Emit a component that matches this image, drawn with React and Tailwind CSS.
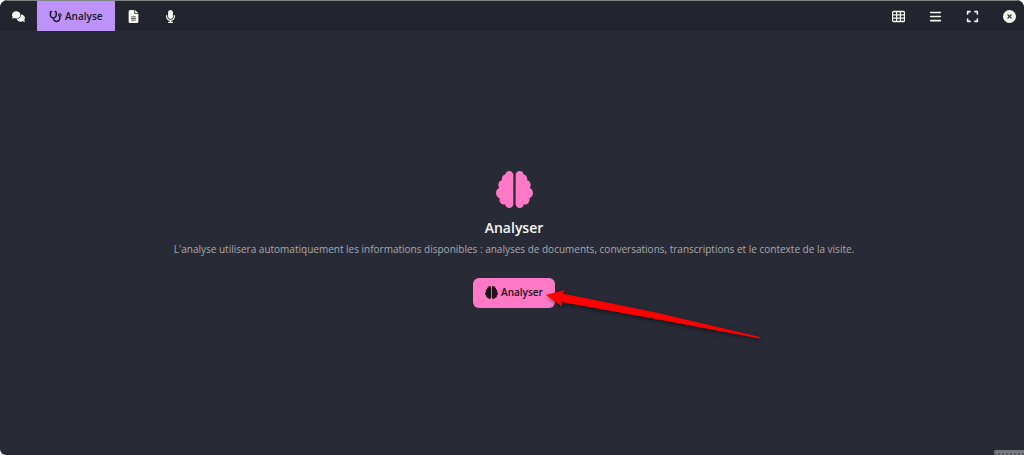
import { useState } from 'react'
import clsx from 'clsx'
import {
  FaBars,
  FaBrain,
  FaCircleXmark,
  FaComments,
  FaExpand,
  FaFileLines,
  FaMicrophone,
  FaStethoscope,
} from 'react-icons/fa6'

function GridIcon({ className }) {
  return (
    <svg aria-hidden="true" viewBox="0 0 13 13" className={className}>
      <rect x="0.500" y="1.500" width="12" height="10" rx="1.200" fill="none" stroke="currentColor" strokeWidth="1.300" />
      <path
        d="M1 4.800 H12 M1 8.200 H12 M4.600 2 V11 M8.400 2 V11"
        stroke="currentColor"
        strokeWidth="1.200"
      />
    </svg>
  )
}

const TABS = [
  { id: 'chat', label: 'Conversations', icon: FaComments },
  { id: 'analyse', label: 'Analyse', icon: FaStethoscope },
  { id: 'documents', label: 'Documents', icon: FaFileLines },
  { id: 'audio', label: 'Transcription', icon: FaMicrophone },
]

const ACTIONS = [
  { id: 'grid', label: 'Grille', icon: GridIcon },
  { id: 'menu', label: 'Menu', icon: FaBars },
  { id: 'expand', label: 'Plein écran', icon: FaExpand },
  { id: 'close', label: 'Fermer', icon: FaCircleXmark },
]

function TopBar({ active, onSelect }) {
  return (
    <header className="flex h-[31px] items-stretch justify-between border-t border-[#7f8583] bg-[#22242e] text-[#f8f8f2]">
      <nav className="flex">
        {TABS.map(({ id, label, icon: Icon }) => (
          <button
            key={id}
            type="button"
            aria-label={label}
            onClick={() => onSelect(id)}
            className={clsx(
              'flex items-center gap-[3px] px-3 text-[10px] font-semibold',
              active === id && 'bg-[#bd93f9] text-[#191325]'
            )}
          >
            <Icon className="size-[13px]" />
            {active === id && <span>{label}</span>}
          </button>
        ))}
      </nav>
      <div className="flex pr-2">
        {ACTIONS.map(({ id, label, icon: Icon }) => (
          <button key={id} type="button" aria-label={label} className="flex items-center pl-6">
            <Icon className="size-[13px]" />
          </button>
        ))}
      </div>
    </header>
  )
}

// Flèche d'annotation pointant vers le bouton
function PointerArrow() {
  return (
    <svg
      aria-hidden="true"
      viewBox="0 0 216 52"
      className="pointer-events-none absolute top-[11px] left-[73px] h-[52px] w-[216px] max-w-none drop-shadow-[1px_2px_2px_rgba(0,0,0,0.5)]"
    >
      <path
        d="M0 6 L19 1 L16.500 4.500 L110 23.500 L214 48 L214 49.500 L110 30 L15.500 13 L16 17.500 Z"
        fill="#ff0000"
      />
    </svg>
  )
}

export default function App() {
  const [active, setActive] = useState('analyse')

  return (
    <div className="bg-white font-['Open_Sans','Noto_Sans',sans-serif]">
      <div className="relative flex min-h-screen flex-col overflow-hidden rounded-t-lg rounded-bl-md bg-[#282a36]">
        <TopBar active={active} onSelect={setActive} />
        <main className="flex flex-1 flex-col items-center justify-center pr-4 pb-2 pl-5 text-center">
          <FaBrain className="size-[37px] text-[#ff79c6]" />
          <h1 className="mt-2 text-[14px] leading-6 font-semibold text-[#f8f8f2]">Analyser</h1>
          <p className="text-[10px] leading-[18px] text-[#a9aaac]">
            L'analyse utilisera automatiquement les informations disponibles : analyses de documents,
            conversations, transcriptions et le contexte de la visite.
          </p>
          <div className="relative mt-5">
            <button
              type="button"
              className="flex h-[30px] items-center gap-[3px] rounded-md bg-[#ff79c6] px-3 text-[10px] font-semibold text-[#210f19]"
            >
              <FaBrain className="size-[13px]" />
              Analyser
            </button>
            <PointerArrow />
          </div>
        </main>
        <div className="absolute right-0 bottom-0 h-[5px] w-[30px] rounded-tl-xs border-b-2 border-dotted border-[#55565e] bg-[#77777e]" />
      </div>
    </div>
  )
}
